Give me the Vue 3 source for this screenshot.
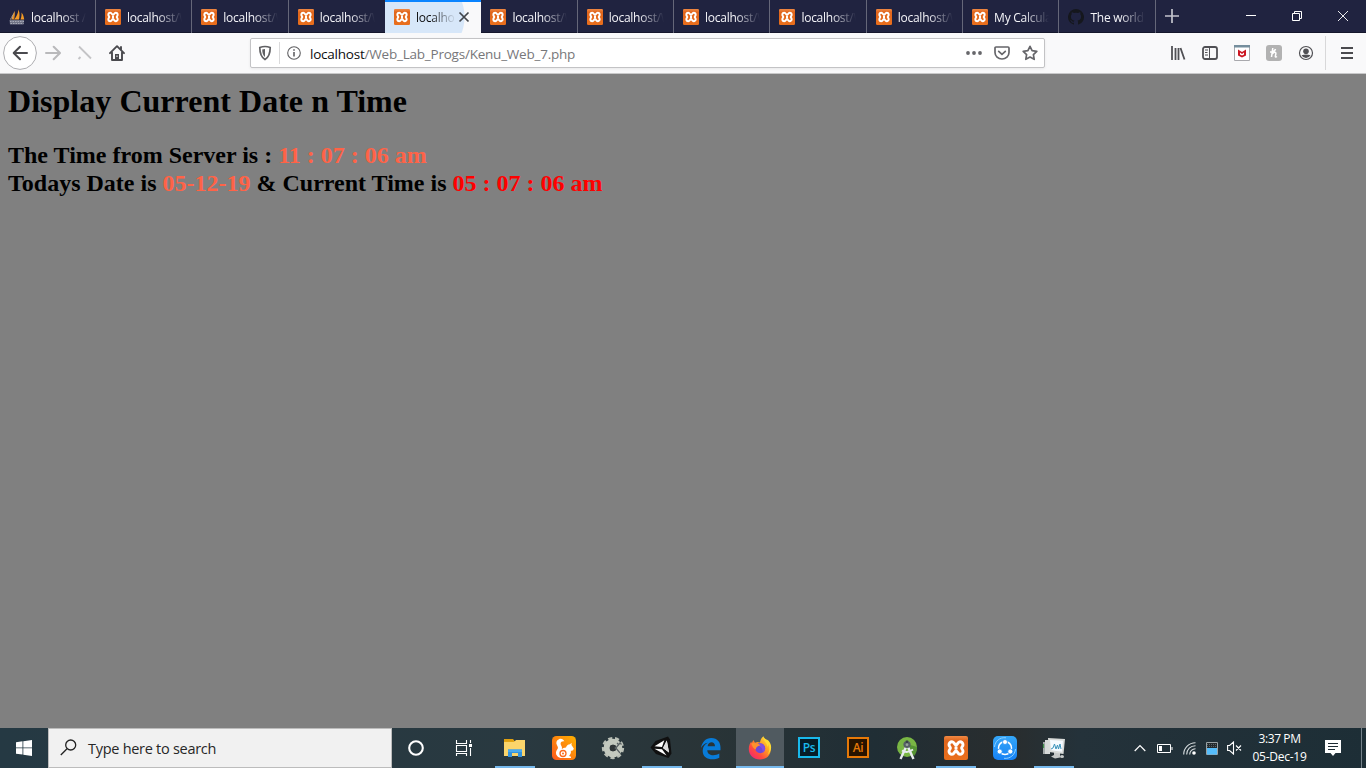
<script setup>
const tabs = [
  { icon: 'pma', title: 'localhost / 1' },
  { icon: 'xampp', title: 'localhost/W' },
  { icon: 'xampp', title: 'localhost/W' },
  { icon: 'xampp', title: 'localhost/W' },
  { icon: 'xampp', title: 'localhost', active: true },
  { icon: 'xampp', title: 'localhost/W' },
  { icon: 'xampp', title: 'localhost/W' },
  { icon: 'xampp', title: 'localhost/W' },
  { icon: 'xampp', title: 'localhost/W' },
  { icon: 'xampp', title: 'localhost/W' },
  { icon: 'xampp', title: 'My Calcula' },
  { icon: 'github', title: "The world's" },
]
const apps = [
  { icon: 'explorer', open: true },
  { icon: 'uc' },
  { icon: 'gear' },
  { icon: 'unity', open: true },
  { icon: 'edge' },
  { icon: 'firefox', open: true, active: true },
  { icon: 'ps' },
  { icon: 'ai' },
  { icon: 'studio' },
  { icon: 'xampp', open: true },
  { icon: 'shareit' },
  { icon: 'monitor', open: true },
]
</script>

<template>
  <div class="screen">
    <svg class="defs" width="0" height="0">
      <defs>
        <linearGradient id="gOrange" x1="0" y1="0" x2="0" y2="1">
          <stop offset="0" stop-color="#f08a45" /><stop offset=".2" stop-color="#e0651c" /><stop offset="1" stop-color="#ea6f1c" />
        </linearGradient>
        <linearGradient id="gUc" x1="1" y1="0" x2="0" y2="1">
          <stop offset="0" stop-color="#ffb300" /><stop offset="1" stop-color="#fb561c" />
        </linearGradient>
        <linearGradient id="gFox" x1="1" y1="0" x2="0.1" y2="1">
          <stop offset="0" stop-color="#fff04a" /><stop offset=".4" stop-color="#ffa222" /><stop offset=".7" stop-color="#ff4b3e" /><stop offset="1" stop-color="#f0207c" />
        </linearGradient>
        <linearGradient id="gShare" x1="0" y1="0" x2="0" y2="1">
          <stop offset="0" stop-color="#35a7f8" /><stop offset="1" stop-color="#1681f5" />
        </linearGradient>
      </defs>
      <symbol id="i-xampp" viewBox="0 0 24 24">
        <rect width="24" height="24" rx="2" fill="url(#gOrange)" />
        <path d="M8 5.700c2.300 0 2.500 3.300 4 3.300s1.700-3.300 4-3.300a3 3 0 0 1 3 3c0 1.800-1.400 2-1.400 3.300s1.400 1.500 1.400 3.300a3 3 0 0 1-3 3c-2.300 0-2.500-3.300-4-3.300s-1.700 3.300-4 3.300a3 3 0 0 1-3-3C5 13.500 6.400 13.300 6.400 12S5 10.500 5 8.700a3 3 0 0 1 3-3zM10.500 12h3" fill="none" stroke="#fff" stroke-width="2.900" stroke-linejoin="round" />
      </symbol>
      <symbol id="i-pma" viewBox="0 0 16 16">
        <path d="M5.500 2 4.800 10H2zM4 5 1 10.500h1.500z" fill="#c8b69b" />
        <path d="M9.500 0.500C11 4 10.500 8 10 10.500H5C7.500 8 9 4.500 9.500 0.500zM12.500 3.500c2 2.500 2.500 5 2.700 7h-3.700c1-2.200 1.200-4.500 1-7z" fill="#f39a25" />
        <path d="M5.500 2c.6 3 .3 5.500-.5 8.500H3z" fill="#e58a1a" />
        <path d="M.5 11h14.500l-.5 4.500H1z" fill="#707385" /><path d="M1 12.500h14M1.500 14.500h13" stroke="#a9abb8" stroke-dasharray="1.500 1" />
      </symbol>
      <symbol id="i-github" viewBox="0 0 16 16">
        <path fill="#15171d" d="M8 0a8 8 0 0 0-2.500 15.600c.4.100.5-.2.500-.4v-1.500c-2.200.5-2.700-1-2.700-1-.4-.9-.9-1.200-.9-1.200-.7-.5.1-.5.1-.5.800.1 1.200.8 1.200.8.700 1.300 1.900.9 2.300.7.100-.5.300-.9.500-1.100-1.800-.2-3.600-.9-3.600-4 0-.9.300-1.600.8-2.100 0-.2-.3-1 .1-2.100 0 0 .7-.2 2.200.8a7.600 7.600 0 0 1 4 0c1.500-1 2.200-.8 2.200-.8.400 1.100.1 1.900.1 2.100.5.600.8 1.300.8 2.100 0 3.100-1.900 3.700-3.600 3.900.3.300.5.800.5 1.500v2.400c0 .2.100.5.500.4A8 8 0 0 0 8 0z" />
      </symbol>
      <symbol id="i-explorer" viewBox="0 0 24 24">
        <path d="M1 3h9l1.500 2H22v15H1z" fill="#e6a919" /><path d="M1 6h10l2-2h9v16H1z" fill="#fbd56b" />
        <path d="M1 3h9v2.500H1z" fill="#e0a010" />
        <path d="M5 21v-7.500h14V21h-4v-4H9v4z" fill="#3593dc" /><path d="M5 13.500h14V16H5z" fill="#48aaf0" />
      </symbol>
      <symbol id="i-uc" viewBox="0 0 24 24">
        <rect width="24" height="24" rx="4.500" fill="url(#gUc)" />
        <path d="M12.300 5.500C11.500 3 9 2.200 7 3.200 4.300 4.300 3.700 7 5 9.200c1 1.700 1.400 2.600.2 4.300-1.500 2-1.800 4.500 0 6.500C6.500 21.500 8 22 10 22h9c.3-1.300-.5-2-2-2 1.500-1.500 2.300-3.200 1.800-5.200 1.700.1 2.700-.7 3-2.300L19.500 9l.1-2.200-1.600 1.500c-2.200.2-3.500 1.400-4 3.200-2 .2-3.200.7-4.200 1.700C10.700 10.500 8.500 9.500 8.600 7.600c.1-1.600 1.900-2.600 3.700-2.100z" fill="#fff" />
        <circle cx="11" cy="17.500" r="3" fill="none" stroke="#fb6a1d" stroke-width="1.300" /><circle cx="11" cy="17.500" r="1" fill="#fb6a1d" />
      </symbol>
      <symbol id="i-gear" viewBox="0 0 24 24">
        <circle cx="12" cy="12" r="9.500" fill="none" stroke="#b9bfb6" stroke-width="3.300" stroke-dasharray="4 2.630" />
        <circle cx="12" cy="12" r="6.300" fill="none" stroke="#c3c9bf" stroke-width="6" />
        <circle cx="12" cy="12" r="3.200" fill="#303638" />
        <path d="m14 13 5-6 1.500 1.500M14 11l5 6M16 7l2 2" fill="none" stroke="#596164" stroke-width="1.200" />
      </symbol>
      <symbol id="i-unity" viewBox="0 0 24 24">
        <path d="M.5 11.500 5.500 5 18 .5l2 3 1.500 14-3 4.500L6 18z" fill="#101010" />
        <path d="m4.500 10.300 9.800-6-2.300 6.700zM16.800 4.500l2.200 12-6-4.500zM4.500 12.800l7.500.4 4.600 6.300z" fill="#fff" />
        <path d="m16.800 4.500 2.200 12-6-4.500z" fill="#ddd" />
      </symbol>
      <symbol id="i-edge" viewBox="0 0 24 24">
        <path fill="#087bd8" d="M2 12C3 6 6.800 2 12.300 2c6.300 0 9.200 4.600 9.200 9.500v2.700H8.300c.1 5.900 7.800 5.900 12 3.300v4.300c-7.200 3.300-17 1.500-16.600-7.300.2-3.800 2.200-6.300 5.200-7.700C5.700 7.200 3.500 9.200 2 12zm6.600-1.800h7.400c0-5.500-6.900-5-7.400 0z" />
      </symbol>
      <symbol id="i-firefox" viewBox="0 0 24 24">
        <path d="M15.500.3c.2 3 3.600 4 5.500 6.500 3.500 4.800 2.500 16.600-9 16.600C5.500 23.400.8 18.800.8 12.900c0-3.300 1-5.600 2.500-7.200l.4 1.500L5.300 4l1.700 2.800c2-1.200 3.600-.9 5-.2.300-2.300 1.400-4.800 3.500-6.300z" fill="url(#gFox)" />
        <circle cx="12.200" cy="12.200" r="5" fill="#7048d6" /><path d="M8.300 8.800c2-2 5.500-1.800 7.500.5 2 2.600 1.400 6-1 7.500 0-4-1.500-6.500-6.500-8z" fill="#8350df" />
        <path d="M3.300 7.500c2.800-1 6.500-.5 9.200 2-1.700 0-4.600 1.200-4.700 4.100-1.700-.5-3.900-3.300-4.500-6.100z" fill="#ff912e" />
        <path d="M15.500.3C14.800 5 19 6.300 19.500 11c1-2 .4-3 .4-3 2 3 2 7.500-.6 11 4.800-4.200 4.800-10 1.500-14-2-1.700-4.900-2.200-5.300-4.700z" fill="#ffdc33" />
      </symbol>
      <symbol id="i-studio" viewBox="0 0 24 24">
        <circle cx="12" cy="11" r="10" fill="#79b644" /><path d="m12 8 7 12c2-2 3-5 3-9z" fill="#569335" />
        <path d="m11 11-5.500 12M13 11l5.500 12" stroke="#e8edef" stroke-width="2.400" /><path d="M7 14.500q5 3.500 11-1" stroke="#e8edef" stroke-width="1.800" fill="none" />
        <circle cx="12" cy="8.500" r="3.600" fill="#566065" /><path d="M10.800 4.500h2.400v3h-2.400z" fill="#394247" /><circle cx="12" cy="8.700" r="1.400" fill="#98a59b" />
      </symbol>
      <symbol id="i-shareit" viewBox="0 0 24 24">
        <rect width="24" height="24" rx="5" fill="url(#gShare)" />
        <path d="M1.500 11C2 5 7 1 13 1.800M22.500 13c-.5 6-5.500 10-11.500 9.300" stroke="#8fd0ff" fill="none" />
        <circle cx="12" cy="12" r="6.500" fill="none" stroke="#fff" stroke-width="1.500" />
        <g fill="#fff" stroke="#2591f7" stroke-width=".8"><circle cx="12" cy="6" r="2.500" /><circle cx="6.700" cy="15.500" r="2.500" /><circle cx="17.300" cy="15.500" r="2.500" /></g>
      </symbol>
      <symbol id="i-monitor" viewBox="0 0 24 24">
        <path d="M1 6h6v12H1z" fill="#a4aaab" /><path d="M3 4h5v14H3z" fill="#d6d9d8" /><path d="M1.500 8v4" stroke="#42924b" stroke-width="1.200" />
        <path d="M12 16v3l-3 1.500 4 2 5-1v-5z" fill="#c6c9c8" />
        <path d="m6 2 17 1-1.500 15L7 16z" fill="#d9dcda" /><path d="m8 4 13 .7-1 11-11-1.400z" fill="#f5faff" />
        <path d="m9 13 2-1 1.500-4 1.500 5 1.500-4 1 4 1.500-5 1 5" stroke="#3c94bc" fill="none" />
        <ellipse cx="20" cy="20.500" rx="2" ry="1.500" fill="#c7caca" />
      </symbol>
    </svg>

    <header class="tabbar">
      <div v-for="(t, i) in tabs" :key="i" class="tab" :class="{ active: t.active, before: i === 3 }">
        <svg class="favicon" width="16" height="16"><use :href="'#i-' + t.icon" /></svg>
        <span class="title">{{ t.title }}</span>
        <svg v-if="t.active" class="close" width="12" height="12" viewBox="0 0 12 12"><path d="m1.500 1.500 9 9m0-9-9 9" stroke="#42454a" stroke-width="1.700" /></svg>
      </div>
      <svg class="plus" width="16" height="16" viewBox="0 0 16 16"><path d="M8 1v14M1 8h14" stroke="#c3c4cd" stroke-width="1.700" /></svg>
      <div class="winctl">
        <svg width="46" height="32" viewBox="0 0 46 32"><path d="M18 15.500h10" stroke="#fff" /></svg>
        <svg width="46" height="32" viewBox="0 0 46 32"><path d="M18.500 13.500h7v7h-7zM20.500 13v-1.500h7v7H26" stroke="#fff" fill="none" /></svg>
        <svg width="46" height="32" viewBox="0 0 46 32"><path d="m18 11 10 10m0-10L18 21" stroke="#fff" stroke-width=".9" /></svg>
      </div>
    </header>

    <nav class="toolbar">
      <div class="left">
        <svg width="34" height="34" viewBox="0 0 34 34"><circle cx="17" cy="17" r="16.400" fill="#fff" stroke="#adadb0" /><path d="M24 17H11m6-6.300L10.700 17l6.300 6.300" fill="none" stroke="#4a4a4e" stroke-width="2" stroke-linecap="round" stroke-linejoin="round" /></svg>
        <svg class="fwd" width="16" height="16" viewBox="0 0 16 16"><path d="M1 8h13M8.700 1.700 15 8l-6.300 6.300" fill="none" stroke="#b9b9bb" stroke-width="2" stroke-linecap="round" stroke-linejoin="round" /></svg>
        <svg class="stop" width="16" height="16" viewBox="0 0 16 16"><path d="m2 1.500 12 12M1.500 14l2-2" fill="none" stroke="#c4c4c6" stroke-width="1.800" /></svg>
        <svg class="home" width="16" height="16" viewBox="0 0 16 16"><path d="m1 8.200 7-7 7 7M3 7.500V15h10V7.500M12 2v2.500" fill="none" stroke="#4a4a4e" stroke-width="1.900" stroke-linejoin="round" stroke-linecap="round" /><path d="M6 9h4v6H6z" fill="#4a4a4e" /><path d="M7.500 10.500h1v1.500h-1z" fill="#f9f9fa" /></svg>
      </div>
      <div class="urlbar">
        <svg class="shield" width="14" height="16" viewBox="0 0 14 16"><path d="M7 1.500c2 0 3.700.4 5.200 1 0 5.500-1 9.500-5.200 12-4.200-2.500-5.200-6.500-5.200-12C3.300 1.900 5 1.500 7 1.500z" fill="none" stroke="#606063" stroke-width="1.700" /><path d="M7 4v8C5 10.500 4.300 8 4.200 4.500z" fill="#606063" /></svg>
        <i class="sep"></i>
        <svg class="info" width="14" height="14" viewBox="0 0 14 14"><circle cx="7" cy="7" r="6.300" fill="none" stroke="#606063" stroke-width="1.100" /><path d="M7 6v4.500M7 3.200v1.600" stroke="#606063" stroke-width="1.600" /></svg>
        <span class="url"><b>localhost</b>/Web_Lab_Progs/Kenu_Web_7.php</span>
        <svg class="dots" width="16" height="4" viewBox="0 0 16 4"><g fill="#66666a"><circle cx="2" cy="2" r="1.900" /><circle cx="8" cy="2" r="1.900" /><circle cx="14" cy="2" r="1.900" /></g></svg>
        <svg class="pocket" width="16" height="16" viewBox="0 0 16 16"><path d="M2 2h12q1 0 1 1v4.500a7 6.500 0 0 1-14 0V3q0-1 1-1z" fill="none" stroke="#66666a" stroke-width="1.700" /><path d="m4.700 6.300 3.300 3 3.300-3" fill="none" stroke="#66666a" stroke-width="1.700" stroke-linecap="round" /></svg>
        <svg class="star" width="16" height="16" viewBox="0 0 16 16"><path d="m8 1.300 2.100 4.300 4.700.7-3.400 3.300.8 4.700L8 12.100l-4.200 2.200.8-4.700L1.200 6.300l4.700-.7z" fill="none" stroke="#66666a" stroke-width="1.700" stroke-linejoin="round" /></svg>
      </div>
      <div class="right">
        <svg width="16" height="16" viewBox="0 0 16 16"><path d="M2 1v14M5.500 3v12M8.500 3v12M10.500 3l4 11.500" stroke="#505054" stroke-width="1.800" /></svg>
        <svg width="16" height="16" viewBox="0 0 16 16"><rect x="1" y="2" width="14" height="12" rx="2" fill="none" stroke="#505054" stroke-width="1.800" /><path d="M7.500 2v12M3 5h3M3 7.500h2.500M3 10h3" stroke="#505054" stroke-width="1" /></svg>
        <svg width="16" height="16" viewBox="0 0 16 16"><path d="M.5.500h15v15H.5z" fill="#fff" stroke="#a9a9ad" /><path d="M0 0h16v2.500H0z" fill="#758e9d" /><path d="M4 4.500 8 7l4-2.500v6L8 12.500l-4-2z" fill="#cc1722" /><path d="M6 7.500 8 9l2-1.500v2l-2 1-2-1z" fill="#fff" /></svg>
        <svg width="16" height="16" viewBox="0 0 16 16"><rect width="16" height="16" rx="3" fill="#b2b2b2" /><path d="M6.800 3 5.500 12M6 9c2.500-3 4.500-2 3.700.5l-.4 1.800q.2 1.200 1.700.2M4 7c3 0 5-1 5.500-3" fill="none" stroke="#fff" stroke-width="1.500" /></svg>
        <svg width="16" height="16" viewBox="0 0 16 16"><circle cx="8" cy="8" r="6.500" fill="none" stroke="#505054" stroke-width="1.200" /><circle cx="8" cy="6.200" r="2.800" fill="#505054" /><path d="M3.500 10.300q4.500-1.600 9 0A5 5 0 0 1 8 13a5 5 0 0 1-4.500-2.700z" fill="#505054" /></svg>
        <i class="divider"></i>
        <svg class="menu" width="12" height="12" viewBox="0 0 12 12"><path d="M0 1h12M0 6h12M0 11h12" stroke="#4a4a4e" stroke-width="1.900" /></svg>
      </div>
    </nav>

    <main class="page">
      <h1>Display Current Date n Time</h1>
      <h2>The Time from Server is : <span class="tomato">11 : 07 : 06 am</span><br>Todays Date is <span class="tomato">05-12-19</span> &amp; Current Time is <span class="red">05 : 07 : 06 am</span></h2>
    </main>

    <footer class="taskbar">
      <div class="start"><svg width="16" height="16" viewBox="0 0 16 16"><path d="M0 2.200 6.500 1.300v6.200H0zM7.300 1.200 16 0v7.500H7.300zM0 8.300h6.500v6.300L0 13.700zM7.300 8.300H16V16l-8.700-1.200z" fill="#fff" /></svg></div>
      <div class="search">
        <svg width="17" height="17" viewBox="0 0 17 17"><circle cx="10.700" cy="6" r="5" fill="none" stroke="#222" stroke-width="1.300" /><path d="M7 9.700.8 16" stroke="#222" stroke-width="1.300" /></svg>
        <span>Type here to search</span>
      </div>
      <div class="cell"><svg width="18" height="18" viewBox="0 0 18 18"><circle cx="9" cy="9" r="6.800" fill="none" stroke="#fff" stroke-width="2.100" /></svg></div>
      <div class="cell tview"><svg width="18" height="18" viewBox="0 0 18 18"><path d="M1.500 1v3.500h10V1M1.500 6.500h10v6h-10zM1.500 17v-2.500h10V17M15.500 1v3M15.500 9v8" fill="none" stroke="#fff" stroke-width="1.100" /><path d="M14 5h3v3h-3z" fill="#fff" /></svg></div>
      <div class="apps">
        <div v-for="a in apps" :key="a.icon" class="app" :class="{ open: a.open, active: a.active }">
          <span v-if="a.icon === 'ps'" class="adobe ps">Ps</span>
          <span v-else-if="a.icon === 'ai'" class="adobe ai">Ai</span>
          <svg v-else width="24" height="24"><use :href="'#i-' + a.icon" /></svg>
        </div>
      </div>
      <div class="tray">
        <svg width="12" height="8" viewBox="0 0 12 8"><path d="m.7 7 5.300-5.500L11.300 7" fill="none" stroke="#fff" stroke-width="1.200" /></svg>
        <svg class="battery" width="16" height="9" viewBox="0 0 16 9"><path d="M.5.500h13v8H.5zM15 3v3" fill="none" stroke="#fff" /><path d="M2 2h3v5H2z" fill="#fff" /></svg>
        <svg class="wifi" width="13" height="13" viewBox="0 0 13 13"><path d="M.7 12.500C.7 6 6 .8 12.500.8M3.700 12.500c0-5 3.800-8.800 8.800-8.800M6.700 12.500c0-3.200 2.600-5.800 5.800-5.800" fill="none" stroke="#d9dfe1" stroke-width="1.100" /><circle cx="11" cy="11" r="1.800" fill="#fff" /></svg>
        <svg class="meter" width="12" height="13" viewBox="0 0 12 13"><path d="M.5.500h11v12H.5z" fill="#252b2e" stroke="#99a2a5" /><path d="M1 2.500h10M1 4.500h10" stroke="#59656a" stroke-dasharray="1 1" /><path d="M1 6h10v6.500H1z" fill="#55bdfb" /></svg>
        <svg class="sound" width="15" height="14" viewBox="0 0 15 14"><path d="M.6 4.500h2L6.500 1v12L2.600 9.500h-2zM9 4.500l5 5m0-5-5 5" fill="none" stroke="#fff" stroke-width="1.100" /></svg>
        <div class="clock"><span class="time">3:37 PM</span><span class="date">05-Dec-19</span></div>
        <svg class="note" width="16" height="16" viewBox="0 0 16 16"><path d="M0 0h16v13h-5.500L8 16l-2.500-3H0z" fill="#fff" /><path d="M3 3.500h10M3 6.500h10M3 9.500h7" stroke="#1e2b33" /></svg>
        <i class="peek"></i>
      </div>
    </footer>
  </div>
</template>

<style>
html, body { margin: 0; overflow: hidden; }
</style>

<style scoped>
.screen { width: 1366px; height: 768px; display: flex; flex-direction: column; background: #808080; font-family: "Open Sans", "Noto Sans", sans-serif; overflow: hidden; }
.defs { position: absolute; }
svg { display: block; flex: none; }
.tabbar { height: 33px; flex: none; display: flex; background: #202340; box-shadow: inset 0 -1px #15172c; }
.tab { box-sizing: border-box; width: 96.35px; height: 33px; flex: none; display: flex; align-items: center; padding: 1px 9px 0 9px; border-right: 1px solid #656779; overflow: hidden; }
.tab:first-child { width: 96px; }
.tab.before { border-color: transparent; }
.tab.active { background: radial-gradient(circle at 34px 15px, #d7e7f9 45px, #f9f9fa 46px); border-right: 0; border-top: 2px solid #0a84ff; padding-top: 0; padding-bottom: 1px; }
.title { margin-left: 6px; width: 55px; overflow: hidden; white-space: nowrap; font-size: 12px; line-height: 18px; padding-top: 2px; letter-spacing: -.26px; color: #f4f4f8; -webkit-mask-image: linear-gradient(90deg, #000 30px, transparent 55px); mask-image: linear-gradient(90deg, #000 30px, transparent 55px); }
.active .title { color: #0c0c0d; width: 38px; -webkit-mask-image: linear-gradient(90deg, #000 14px, transparent 40px); mask-image: linear-gradient(90deg, #000 14px, transparent 40px); }
.close { margin-left: 4px; }
.plus { margin: 8px 0 0 8px; }
.winctl { margin-left: auto; display: flex; }
.toolbar { box-sizing: border-box; height: 41px; flex: none; display: flex; align-items: center; background: #f9f9fa; border-bottom: 1px solid #c8c8c9; }
.left { width: 250px; display: flex; align-items: center; padding-left: 3px; box-sizing: border-box; }
.fwd { margin-left: 8px; }
.stop { margin-left: 16px; }
.home { margin-left: 16px; }
.urlbar { box-sizing: border-box; width: 795px; height: 30px; display: flex; align-items: center; background: #fff; border: 1px solid #c3c3c5; border-radius: 2px; box-shadow: 0 1px 3px #0001; }
.shield { margin-left: 7px; }
.sep { width: 1px; height: 22px; margin-left: 7px; background: #dadadb; }
.info { margin-left: 7px; }
.url { margin-left: 9px; width: 656px; font-size: 13.5px; line-height: 20px; letter-spacing: -.22px; color: #77777a; white-space: nowrap; padding-top: 2px; box-sizing: border-box; }
.url b { font-weight: 400; color: #0c0c0d; }
.pocket { margin-left: 12px; }
.star { margin-left: 12px; }
.right { margin-left: auto; display: flex; align-items: center; gap: 16px; }
.divider { width: 1px; height: 34px; background: #d8d8d9; margin-left: -5px; }
.menu { margin: 0 13px 0 -1px; }
.page { flex: 1; padding: 9px 8px 8px; font-family: "Liberation Serif", "Times New Roman", serif; color: #000; }
h1 { margin: 0; font-size: 32px; line-height: 37px; font-weight: 700; white-space: nowrap; letter-spacing: .03px; }
h2 { margin: 21px 0 0; font-size: 24px; line-height: 28px; font-weight: 700; white-space: nowrap; }
.tomato { color: #ff6347; }
.red { color: #f00; }
.taskbar { height: 40px; flex: none; display: flex; background: linear-gradient(90deg, #253943, #293940 38%, #293437 52%, #202e35 64%, #292d2e 74%, #24323a 79%, #1d2e36); }
.start { width: 48px; display: flex; align-items: center; justify-content: center; }
.search { box-sizing: border-box; width: 344px; display: flex; align-items: center; padding: 0 0 1px 11px; background: #f1f1f1; border: 1px solid #bcbcbc; }
.search span { margin-left: 11px; padding-top: 2px; font-size: 14.5px; letter-spacing: -.28px; color: #272727; }
.cell { width: 48px; display: flex; align-items: center; justify-content: center; }
.tview { width: 51px; box-sizing: border-box; padding-right: 4px; }
.apps { display: flex; gap: 1px; }
.app { box-sizing: border-box; width: 48px; height: 40px; display: flex; align-items: center; justify-content: center; position: relative; }
.app.active { background: #505a60; }
.app.open::after { content: ""; position: absolute; bottom: 0; left: 4px; right: 4px; height: 2px; background: #76b9ed; }
.app.active::after { left: 0; right: 0; }
.adobe { box-sizing: border-box; width: 22px; height: 21px; margin-bottom: 2px; border: 2px solid; text-align: center; font-size: 12px; font-weight: 600; line-height: 17px; letter-spacing: -.3px; }
.ps { color: #19b9ec; background: #071d28; }
.ai { color: #e67908; background: #271300; }
.tray { margin-left: auto; display: flex; align-items: center; color: #fff; }
.battery { margin-left: 11px; }
.wifi { margin-left: 10px; }
.meter { margin-left: 10px; }
.sound { margin-left: 9px; }
.clock { width: 75px; padding-bottom: 1px; display: flex; flex-direction: column; align-items: center; font-size: 12px; line-height: 18px; white-space: nowrap; }
.time { letter-spacing: -.4px; }
.date { letter-spacing: -.25px; }
.note { margin-left: 8px; }
.peek { width: 1px; height: 40px; margin: 0 4px 0 20px; background: #75828a; }
</style>
